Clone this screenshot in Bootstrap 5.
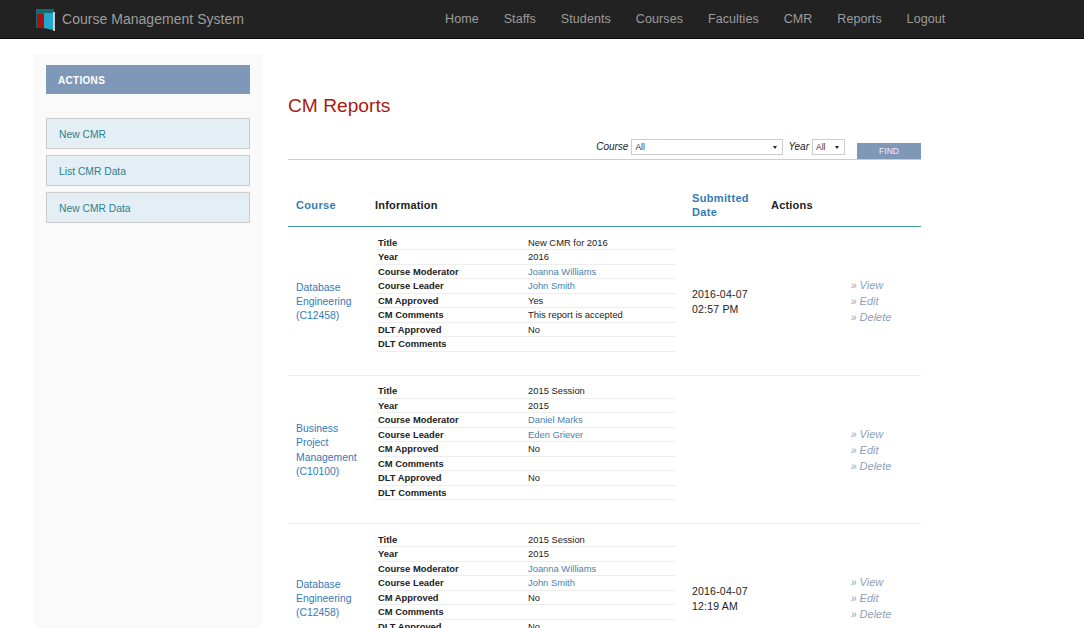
<!DOCTYPE html>
<html lang="en">
<head>
    <meta charset="UTF-8">
    <meta name="viewport" content="width=device-width, initial-scale=1.0">
    <title>CM Reports</title>
    <link href="https://cdn.jsdelivr.net/npm/bootstrap@5.3.0/dist/css/bootstrap.min.css" rel="stylesheet">
    <style>
        html, body { height: 628px; overflow: hidden; }
        body { font-family: "Liberation Sans", Arial, sans-serif; font-size: 10px; color: #222; background: #fff; }
        a { text-decoration: none; color: #337ab7; }
        .top-bar { height: 39px; background: #222; border-bottom: 1px solid #080808; padding: 0 0 0 36px; }
        .brand-text { font-size: 14px; letter-spacing: .03px; color: #9d9d9d; margin-left: 6px; }
        .top-links { margin-left: 201px; gap: 24.85px; }
        .top-links a { font-size: 12.5px; letter-spacing: .1px; color: #9d9d9d; }
        .page-area { height: 589px; padding-left: 34px; }
        .side-col { width: 228px; height: 574px; margin-top: 15px; padding: 11px 12px; background: #fafafa; }
        .side-head { height: 29px; line-height: 31px; padding-left: 12px; background: #8098b8; color: #fff; font-size: 10px; font-weight: 700; letter-spacing: .3px; margin-bottom: 24px; }
        .side-item { display: block; height: 31px; line-height: 31px; padding-left: 12px; margin-bottom: 6px; background: #e3eff5; border: 1px solid #ccc; color: #2f7f8f; font-size: 10.3px; }
        .main-col { width: 633px; margin-left: 26px; }
        .page-title { color: #a81c10; font-size: 19.2px; font-weight: 400; margin: 0; padding-top: 56px; height: 101px; line-height: 21px; }
        .filter-bar { height: 20px; border-bottom: 1px solid #ccc; font-size: 10px; margin-bottom: 20px; }
        .filter-label { font-style: italic; margin-right: 3px; margin-top: -1px; }
        .fake-select { height: 16px; margin-top: -1px; border: 1px solid #ccc; padding: 0 5px 0 3px; font-size: 8.5px; line-height: 14px; color: #333; }
        .fake-select::after { content: ""; border: 2px solid transparent; border-top: 3px solid #222; margin-top: 6px; margin-left: 6px; height: 0; }
        .select-course { width: 152px; margin-right: 5px; }
        .select-year { width: 33px; margin-right: 12px; }
        .find-btn { width: 64px; height: 16px; margin-top: 3px; line-height: 17px; text-align: center; background: #8098b8; color: #eef; font-size: 8.5px; }
        .report-table { width: 633px; margin: 0; table-layout: fixed; border-collapse: separate; border-spacing: 0; }
        .report-table > thead > tr > th { height: 47px; padding: 4px 8px 0; font-size: 11px; line-height: 14px; font-weight: 700; vertical-align: middle; border-bottom: 1px solid #3f9a9a; background: none; letter-spacing: .2px; }
        .report-table > thead th a { color: #337ab7; letter-spacing: .35px; }
        .col-course { width: 87px; }
        .col-info { width: 317px; }
        .col-date { width: 79px; }
        .col-acts { width: 150px; }
        .report-table > tbody > tr > td { padding: 3px 8px 0; font-size: 10.4px; vertical-align: middle; border-bottom: 1px solid #eee; line-height: 14.4px; background: none; }
        .report-table > tbody > tr > td.info-cell { padding: 8px 0 23px; vertical-align: top; }
        .report-table > tbody > tr > td.date-cell { padding: 2px 0 0; }
        .report-table > tbody > tr > td.acts-cell { padding: 1px 0 0 80px; }
        .detail-table { width: 301px; table-layout: fixed; border-collapse: collapse; }
        .detail-table td { height: 14.5px; padding: 1px 3px 0; font-size: 9.4px; line-height: 12px; border-bottom: 1px solid #eee; }
        .detail-table td:first-child { width: 150px; font-weight: 700; }
        .detail-table td a { color: #4a7fae; }
        .date-text { font-size: 10.5px; letter-spacing: .2px; }
        .row-actions { font-style: italic; font-size: 11px; line-height: 16px; }
        .row-actions a { display: block; color: #8f9fb8; }
        .row-actions span { font-size: 10px; line-height: 1; }
    </style>
</head>
<body>
    <div class="top-bar d-flex align-items-center">
        <svg width="20" height="24" viewBox="0 0 20 24">
            <rect x="0" y="2" width="18" height="19" fill="#116a72"/>
            <rect x="1" y="7" width="7" height="14" fill="#a81010"/>
            <path d="M8 6H17V23L8 21Z" fill="#22a8cc"/>
            <path d="M18 5V24" stroke="#fff" stroke-width="1.5"/>
        </svg>
        <span class="brand-text">Course Management System</span>
        <div class="top-links d-flex">
            <a href="#">Home</a>
            <a href="#">Staffs</a>
            <a href="#">Students</a>
            <a href="#">Courses</a>
            <a href="#">Faculties</a>
            <a href="#">CMR</a>
            <a href="#">Reports</a>
            <a href="#">Logout</a>
        </div>
    </div>

    <div class="page-area d-flex">
        <div class="side-col">
            <div class="side-head">ACTIONS</div>
            <a class="side-item" href="#">New CMR</a>
            <a class="side-item" href="#">List CMR Data</a>
            <a class="side-item" href="#">New CMR Data</a>
        </div>

        <div class="main-col">
            <h1 class="page-title">CM Reports</h1>
            <div class="filter-bar d-flex justify-content-end">
                <span class="filter-label">Course</span>
                <div class="fake-select select-course d-flex justify-content-between">All</div>
                <span class="filter-label">Year</span>
                <div class="fake-select select-year d-flex justify-content-between">All</div>
                <div class="find-btn">FIND</div>
            </div>

            <table class="report-table" id="reports">
                <thead>
                    <tr>
                        <th class="col-course"><a href="#">Course</a></th>
                        <th class="col-info px-0">Information</th>
                        <th class="col-date ps-0"><a href="#">Submitted Date</a></th>
                        <th class="col-acts ps-0">Actions</th>
                    </tr>
                </thead>
                <tbody></tbody>
            </table>
        </div>
    </div>

    <script>
        var reports = [
            { course: "Database Engineering (C12458)", title: "New CMR for 2016", year: "2016", moderator: "Joanna Williams", leader: "John Smith", cmApproved: "Yes", cmComments: "This report is accepted", dltApproved: "No", date: ["2016-04-07", "02:57 PM"] },
            { course: "Business Project Management (C10100)", title: "2015 Session", year: "2015", moderator: "Daniel Marks", leader: "Eden Griever", cmApproved: "No", cmComments: "", dltApproved: "No", date: [] },
            { course: "Database Engineering (C12458)", title: "2015 Session", year: "2015", moderator: "Joanna Williams", leader: "John Smith", cmApproved: "No", cmComments: "", dltApproved: "No", date: ["2016-04-07", "12:19 AM"] }
        ];

        var tbody = document.querySelector("#reports tbody");
        reports.forEach(function (r) {
            var tr = document.createElement("tr");
            tr.innerHTML =
                '<td><a href="#">' + r.course + '</a></td>' +
                '<td class="info-cell"><table class="detail-table">' +
                '<tr><td>Title</td><td>' + r.title + '</td></tr>' +
                '<tr><td>Year</td><td>' + r.year + '</td></tr>' +
                '<tr><td>Course Moderator</td><td><a href="#">' + r.moderator + '</a></td></tr>' +
                '<tr><td>Course Leader</td><td><a href="#">' + r.leader + '</a></td></tr>' +
                '<tr><td>CM Approved</td><td>' + r.cmApproved + '</td></tr>' +
                '<tr><td>CM Comments</td><td>' + r.cmComments + '</td></tr>' +
                '<tr><td>DLT Approved</td><td>' + r.dltApproved + '</td></tr>' +
                '<tr><td>DLT Comments</td><td></td></tr>' +
                '</table></td>' +
                '<td class="date-cell"><div class="date-text">' + r.date.join("<br>") + '</div></td>' +
                '<td class="acts-cell"><div class="row-actions"><a href="#"><span>»</span> View</a><a href="#"><span>»</span> Edit</a><a href="#"><span>»</span> Delete</a></div></td>';
            tbody.appendChild(tr);
        });
    </script>
    <script src="https://cdn.jsdelivr.net/npm/bootstrap@5.3.0/dist/js/bootstrap.bundle.min.js"></script>
</body>
</html>
